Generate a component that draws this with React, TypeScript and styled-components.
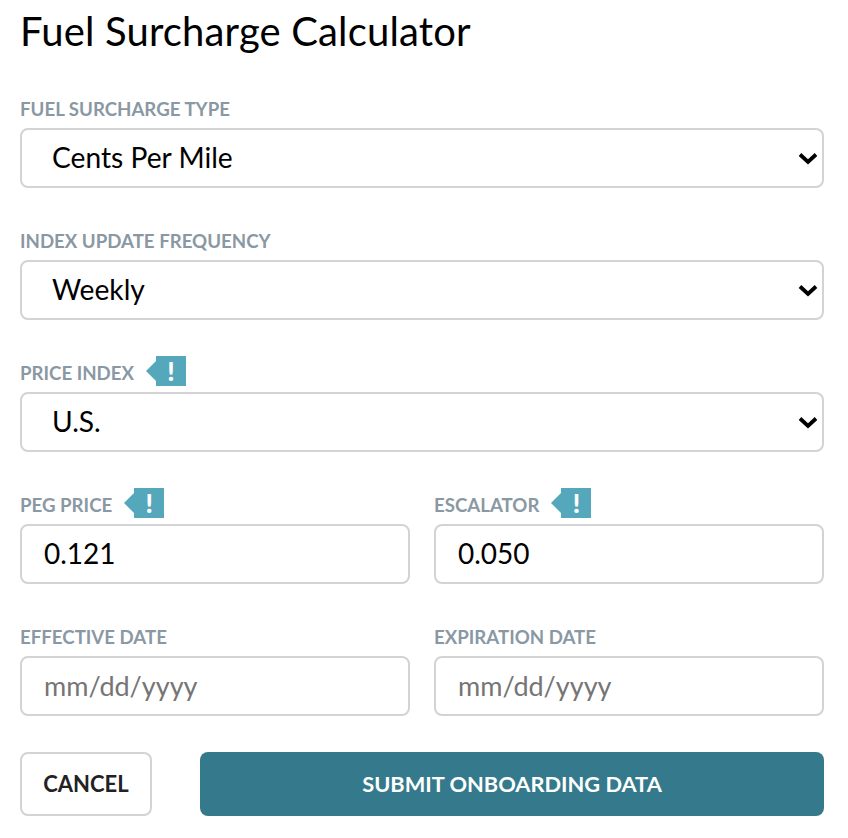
import styled, { createGlobalStyle } from "styled-components";

const GlobalStyle = createGlobalStyle`
	html, body {
		margin: 0;
		padding: 0;
		background: #ffffff;
	}
	* {
		box-sizing: border-box;
	}
`;

const Page = styled.div`
	width: 848px;
	height: 838px;
	padding: 7px 24px 0 20px;
	font-family: Lato, "Liberation Sans", sans-serif;
	overflow: hidden;
`;

const Title = styled.h1`
	margin: 0 0 41px;
	height: 44px;
	font-size: 40px;
	line-height: 48px;
	letter-spacing: 0.16px;
	font-weight: 400;
	color: #000000;
`;

const Form = styled.form`
	display: flex;
	flex-direction: column;
	gap: 36px;
`;

const Row = styled.div`
	display: grid;
	grid-template-columns: 1fr 1fr;
	column-gap: 24px;
`;

const Field = styled.div`
	display: flex;
	flex-direction: column;
	min-width: 0;
`;

const LabelRow = styled.div`
	display: flex;
	align-items: center;
	gap: 12px;
	height: 30px;
	margin-bottom: 6px;
`;

const Label = styled.label`
	font-size: 18.67px;
	line-height: 24px;
	font-weight: 700;
	color: #8a98a4;
	position: relative;
	top: 2px;
`;

const Badge = styled.span`
	position: relative;
	width: 30px;
	height: 30px;
	margin-left: 10px;
	display: flex;
	align-items: center;
	justify-content: center;
	background: #55a8bc;
	color: #ffffff;
	font-size: 26px;
	line-height: 30px;
	font-weight: 900;

	&::before {
		content: "";
		position: absolute;
		left: -10px;
		top: 5px;
		border-style: solid;
		border-width: 10px 10px 10px 0;
		border-color: transparent #55a8bc transparent transparent;
	}
`;

const SelectWrap = styled.div`
	position: relative;
	height: 60px;
`;

const Select = styled.select`
	appearance: none;
	width: 100%;
	height: 60px;
	padding: 0 40px 2px 30px;
	border: 2px solid #d3d3d3;
	border-radius: 8px;
	background: #ffffff;
	font-family: inherit;
	font-size: 28.2px;
	color: #000000;
`;

const Chevron = styled.svg`
	position: absolute;
	right: 6px;
	top: 24px;
	width: 20px;
	height: 13px;
	pointer-events: none;
`;

const Input = styled.input`
	width: 100%;
	height: 60px;
	padding: 0 22px 2px;
	border: 2px solid #d3d3d3;
	border-radius: 8px;
	background: #ffffff;
	font-family: inherit;
	font-size: 28px;
	color: #000000;
	outline: none;

	&::placeholder {
		color: #757575;
		opacity: 1;
		font-size: 27px;
	}
`;

const Actions = styled.div`
	display: flex;
	gap: 48px;
`;

const Button = styled.button<{ $primary?: boolean }>`
	flex: ${(p) => (p.$primary ? "1" : "0 0 132px")};
	height: 64px;
	padding-bottom: 2px;
	border-radius: 8px;
	border: ${(p) => (p.$primary ? "none" : "2px solid #d3d3d3")};
	background: ${(p) => (p.$primary ? "#347a8c" : "#ffffff")};
	color: ${(p) => (p.$primary ? "#ffffff" : "#222222")};
	font-family: inherit;
	font-size: ${(p) => (p.$primary ? "21.8px" : "22px")};
	font-weight: 700;
`;

function SelectField({ label, value, hint }: { label: string; value: string; hint?: boolean }) {
	return (
		<Field>
			<LabelRow>
				<Label>{label}</Label>
				{hint && <Badge>!</Badge>}
			</LabelRow>
			<SelectWrap>
				<Select defaultValue={value}>
					<option>{value}</option>
				</Select>
				<Chevron viewBox="0 0 20 13">
					<path d="M2 2.5 L10 10 L18 2.5" fill="none" stroke="#000" strokeWidth="3.8" />
				</Chevron>
			</SelectWrap>
		</Field>
	);
}

function InputField({
	label,
	value,
	placeholder,
	hint,
}: {
	label: string;
	value?: string;
	placeholder?: string;
	hint?: boolean;
}) {
	return (
		<Field>
			<LabelRow>
				<Label>{label}</Label>
				{hint && <Badge>!</Badge>}
			</LabelRow>
			<Input defaultValue={value} placeholder={placeholder} />
		</Field>
	);
}

function App() {
	return (
		<Page>
			<GlobalStyle />
			<Title>Fuel Surcharge Calculator</Title>
			<Form>
				<SelectField label="FUEL SURCHARGE TYPE" value="Cents Per Mile" />
				<SelectField label="INDEX UPDATE FREQUENCY" value="Weekly" />
				<SelectField label="PRICE INDEX" value="U.S." hint />
				<Row>
					<InputField label="PEG PRICE" value="0.121" hint />
					<InputField label="ESCALATOR" value="0.050" hint />
				</Row>
				<Row>
					<InputField label="EFFECTIVE DATE" placeholder="mm/dd/yyyy" />
					<InputField label="EXPIRATION DATE" placeholder="mm/dd/yyyy" />
				</Row>
				<Actions>
					<Button type="button">CANCEL</Button>
					<Button type="button" $primary>
						SUBMIT ONBOARDING DATA
					</Button>
				</Actions>
			</Form>
		</Page>
	);
}

export default App;
